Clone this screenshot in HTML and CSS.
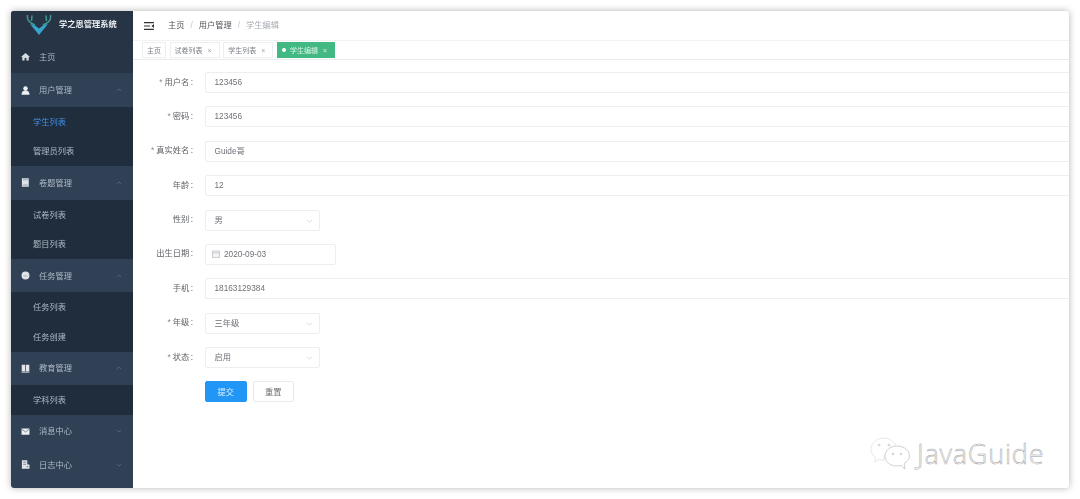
FILE: index.html

```html
<!DOCTYPE html>
<html>
<head>
    <title>学之思管理系统</title>
    <link rel="stylesheet" href="styles.css">
</head>
<body>
    <div class="window">
        <div class="sidebar">
            <div class="logo">
                <svg class="logo-mark" width="26" height="20" viewBox="0 0 26 20">
                    <path d="M1.500 0 C1 4 2.500 7 6 8.500 L9 10 M6 .5 L5.500 6 M24.500 0 C25 4 23.500 7 20 8.500 L17 10 M20 .5 L20.500 6" fill="none" stroke="#3f9a96" stroke-width="1.500"/>
                    <path d="M4 9 L9 10.500 L13 13.500 L17 10.500 L22 9 L17 15 L13 20 L9 15 Z" fill="#36a5cc"/>
                </svg>
                <span class="logo-text">学之思管理系统</span>
            </div>
            <div class="menu-item first">
                <svg class="menu-icon" viewBox="0 0 10 10"><path d="M5 1 L10 5.600 L8.600 5.600 L8.600 9.400 L6 9.400 L6 6.600 L4 6.600 L4 9.400 L1.400 9.400 L1.400 5.600 L0 5.600 Z" fill="#d6dbe1"/></svg>
                <span>主页</span>
            </div>
            <div class="menu-item">
                <svg class="menu-icon" viewBox="0 0 10 10"><circle cx="5" cy="2.800" r="2.500" fill="#eef1f4"/><path d="M.6 9.600 C.6 6.400 2.200 5 5 5 C7.800 5 9.400 6.400 9.400 9.600 Z" fill="#eef1f4"/></svg>
                <span>用户管理</span>
                <svg class="arrow" viewBox="0 0 8 5"><path d="M1 4 L4 1 L7 4" /></svg>
            </div>
            <div class="sub-item active">学生列表</div>
            <div class="sub-item">管理员列表</div>
            <div class="menu-item">
                <svg class="menu-icon" viewBox="0 0 10 10"><path d="M1 .4 H8.600 V9.600 H1 Z" fill="#dfe3e8"/><path d="M2 7.800 H7.600 M2 2 H7.600" stroke="#6a7a8d" stroke-width="0.700"/></svg>
                <span>卷题管理</span>
                <svg class="arrow" viewBox="0 0 8 5"><path d="M1 4 L4 1 L7 4" /></svg>
            </div>
            <div class="sub-item">试卷列表</div>
            <div class="sub-item">题目列表</div>
            <div class="menu-item">
                <svg class="menu-icon" viewBox="0 0 10 10"><circle cx="5" cy="5" r="4.400" fill="#dfe3e8"/><path d="M3 5.400 H7" stroke="#9aa5b2" stroke-width="0.800"/></svg>
                <span>任务管理</span>
                <svg class="arrow" viewBox="0 0 8 5"><path d="M1 4 L4 1 L7 4" /></svg>
            </div>
            <div class="sub-item">任务列表</div>
            <div class="sub-item">任务创建</div>
            <div class="menu-item">
                <svg class="menu-icon" viewBox="0 0 10 10"><path d="M.8 .8 H4.600 V8 H.8 Z M5.400 .8 H9.200 V8 H5.400 Z" fill="#e3e6ea"/><path d="M.6 9 H9.400" stroke="#e3e6ea" stroke-width="1.100"/></svg>
                <span>教育管理</span>
                <svg class="arrow" viewBox="0 0 8 5"><path d="M1 4 L4 1 L7 4" /></svg>
            </div>
            <div class="sub-item">学科列表</div>
            <div class="menu-item">
                <svg class="menu-icon" viewBox="0 0 10 10"><path d="M.6 1.600 H9.400 V8.600 H.6 Z" fill="#eceff2"/><path d="M.6 2.200 L5 5.600 L9.400 2.200" fill="none" stroke="#56677c" stroke-width="0.800"/></svg>
                <span>消息中心</span>
                <svg class="arrow" viewBox="0 0 8 5"><path d="M1 1 L4 4 L7 1" /></svg>
            </div>
            <div class="menu-item">
                <svg class="menu-icon" viewBox="0 0 10 10"><path d="M1 .4 H7 V5 H9.400 V9.600 H1 Z" fill="#dfe3e8"/><path d="M2.400 2.400 H5.600 M2.400 4.800 H5.600 M6 7.400 H8.200" stroke="#5b6b80" stroke-width="0.800"/></svg>
                <span>日志中心</span>
                <svg class="arrow" viewBox="0 0 8 5"><path d="M1 1 L4 4 L7 1" /></svg>
            </div>
        </div>

        <div class="main">
            <div class="navbar">
                <svg class="hamburger" width="10" height="8" viewBox="0 0 10 8"><path d="M0 .6 H10 M0 4 H6 M0 7.400 H10" stroke="#303133" stroke-width="1.200"/><path d="M10 2 L7.400 4 L10 6 Z" fill="#303133"/></svg>
                <span class="crumb">主页</span>
                <span class="crumb-sep">/</span>
                <span class="crumb">用户管理</span>
                <span class="crumb-sep">/</span>
                <span class="crumb current">学生编辑</span>
            </div>
            <div class="tags">
                <span class="tag">主页</span>
                <span class="tag">试卷列表<i>×</i></span>
                <span class="tag">学生列表<i>×</i></span>
                <span class="tag tag-active"><b></b>学生编辑<i>×</i></span>
            </div>
            <div class="form">
                <div class="row">
                    <div class="label"><em>*</em>用户名<span class="colon">:</span></div>
                    <div class="field wide">123456</div>
                </div>
                <div class="row">
                    <div class="label"><em>*</em>密码<span class="colon">:</span></div>
                    <div class="field wide">123456</div>
                </div>
                <div class="row">
                    <div class="label"><em>*</em>真实姓名<span class="colon">:</span></div>
                    <div class="field wide">Guide哥</div>
                </div>
                <div class="row">
                    <div class="label">年龄<span class="colon">:</span></div>
                    <div class="field wide">12</div>
                </div>
                <div class="row">
                    <div class="label">性别<span class="colon">:</span></div>
                    <div class="field select">男<svg class="caret" viewBox="0 0 8 5"><path d="M1 1 L4 4 L7 1"/></svg></div>
                </div>
                <div class="row">
                    <div class="label">出生日期<span class="colon">:</span></div>
                    <div class="field date">
                        <svg class="cal" viewBox="0 0 8 8"><rect x=".5" y="1" width="7" height="6.500" fill="#f4f4f5" stroke="#c0c4cc" stroke-width=".8"/><path d="M.5 2.800 H7.500" stroke="#c0c4cc" stroke-width=".8"/></svg>
                        2020-09-03
                    </div>
                </div>
                <div class="row">
                    <div class="label">手机<span class="colon">:</span></div>
                    <div class="field wide">18163129384</div>
                </div>
                <div class="row">
                    <div class="label"><em>*</em>年级<span class="colon">:</span></div>
                    <div class="field select">三年级<svg class="caret" viewBox="0 0 8 5"><path d="M1 1 L4 4 L7 1"/></svg></div>
                </div>
                <div class="row">
                    <div class="label"><em>*</em>状态<span class="colon">:</span></div>
                    <div class="field select">启用<svg class="caret" viewBox="0 0 8 5"><path d="M1 1 L4 4 L7 1"/></svg></div>
                </div>
                <div class="buttons">
                    <span class="btn btn-primary">提交</span>
                    <span class="btn">重置</span>
                </div>
            </div>
        </div>
    </div>

    <div class="watermark">
        <svg width="41" height="33" viewBox="0 0 41 33" fill="#fff" stroke="#c4c4c4" stroke-width=".8">
            <path stroke="#e2e2e2" d="M14 1 C7 1 1 6 1 12 C1 16 3 19 6 21 L4.500 25 L9.500 22.500 C11 23 12.500 23.200 14 23.200 C13 17 19 11.500 27 12 C25.500 5.500 20 1 14 1 Z"/>
            <path d="M27 9 C20 9 15 13.500 15 19 C15 25 20 29 27 29 C28.500 29 30 28.800 31 28.300 L35 32 L34 26.500 C37 24.800 39.500 22.500 39.500 19 C39.500 13.500 34 9 27 9 Z"/>
            <circle cx="9" cy="8" r="1"/><circle cx="19" cy="8" r="1"/><circle cx="23" cy="17" r=".9"/><circle cx="31" cy="17" r=".9"/>
        </svg>
        <span>JavaGuide</span>
    </div>
</body>
</html>
```

FILE: styles.css

```css
html, body { margin: 0; height: 499px; overflow: hidden; }
body { background: #fff; font-family: "Liberation Sans", "Noto Sans CJK SC", sans-serif; font-size: 8.250px; padding: 11px; box-sizing: border-box; position: relative; }

.window { display: flex; width: 1058px; height: 477px; background: #fff; border-radius: 3px; overflow: hidden; box-shadow: 0 0 7px rgba(0,0,0,0.3); filter: blur(0.4px); }

.sidebar { width: 122px; flex-shrink: 0; background: #304156; color: #aeb9c6; font-family: "Noto Sans CJK SC", sans-serif; }
.logo { height: 29px; display: flex; align-items: center; background: #263445; padding: 0 0 0 15px; box-sizing: border-box; }
.logo-mark { flex-shrink: 0; margin-bottom: 1px; }
.logo-text { color: #e8ebee; font-weight: bold; margin-left: 7px; padding-bottom: 5px; }

.menu-item { height: 33.400px; display: flex; align-items: center; padding-left: 10px; background: #304156; }
.menu-item.first { background: #263445; }
.menu-item span { padding-bottom: 2px; }
.menu-icon { width: 9px; height: 9px; margin-right: 9px; flex-shrink: 0; }
.arrow { width: 6px; height: 4px; margin-left: auto; margin-right: 11px; fill: none; stroke: #5d6f84; stroke-width: 1; }
.sub-item { height: 29.700px; line-height: 29px; padding-left: 22px; background: #1f2d3d; }
.sub-item.active { color: #4090e8; }

.main { flex: 1; min-width: 0; }
.navbar { height: 30px; display: flex; align-items: center; padding-left: 11px; color: #303133; border-bottom: 1px solid #f2f2f2; box-sizing: border-box; font-family: "Noto Sans CJK SC", sans-serif; }
.hamburger { margin-right: 14px; }
.crumb { color: #50545c; padding-bottom: 4px; }
.crumb.current { color: #a8acb3; }
.crumb-sep { color: #c0c4cc; margin: 0 6px; font-family: "Liberation Sans", sans-serif; }

.tags { height: 19px; display: flex; align-items: flex-start; gap: 3.600px; padding: 1px 0 0 9px; border-bottom: 1px solid #e8eaed; box-sizing: border-box; }
.tag { height: 15.500px; line-height: 14px; border: 1px solid #eceef1; box-sizing: border-box; padding: 0 4px; font-size: 7px; color: #7a7e85; white-space: nowrap; font-family: "Noto Sans CJK SC", sans-serif; }
.tag i { font-style: normal; margin-left: 5px; margin-right: 3px; color: #a0a4ab; font-family: "Liberation Sans", sans-serif; }
.tag-active { background: #42b983; border-color: #42b983; color: #d8f2e5; }
.tag-active i { color: #d9f2e6; }
.tag-active b { display: inline-block; width: 4px; height: 4px; border-radius: 50%; background: #fff; margin-right: 4px; vertical-align: 1px; }

.form { padding-top: 12px; }
.row { display: flex; align-items: center; height: 21px; margin-bottom: 13.400px; }
.label { width: 60px; text-align: right; flex-shrink: 0; color: #606266; margin-right: 12px; padding-bottom: 4px; font-family: "Noto Sans CJK SC", sans-serif; white-space: nowrap; }
.label em { font-style: normal; color: #9a8a8a; margin-right: 2px; font-family: "Liberation Sans", sans-serif; }
.colon { margin-left: 1.500px; font-family: "Liberation Sans", sans-serif; }
.field { height: 21px; line-height: 19px; border: 1px solid #eceef1; border-radius: 2px; box-sizing: border-box; padding: 0 8.500px; color: #6e7177; position: relative; flex-shrink: 0; }
.wide { flex: 1; margin-right: -6px; }
.select { width: 115px; }
.date { width: 131px; display: flex; align-items: center; padding-left: 6px; }
.cal { width: 8px; height: 8px; margin-right: 4px; }
.caret { position: absolute; right: 6px; top: 8px; width: 7px; height: 4px; fill: none; stroke: #c0c4cc; stroke-width: 0.800; }

.buttons { display: flex; gap: 6px; padding-left: 72px; margin-top: -1px; font-family: "Noto Sans CJK SC", sans-serif; }
.btn { width: 41.500px; height: 21px; line-height: 18px; border: 1px solid #e8eaed; border-radius: 2px; box-sizing: border-box; text-align: center; color: #6e7177; }
.btn-primary { background: #2196f7; border-color: #2196f7; color: #dceeff; }

.watermark { position: absolute; left: 870px; top: 435px; display: flex; align-items: center; gap: 6px; }
.watermark span { font-family: "Open Sans", "Liberation Sans", sans-serif; font-size: 27px; color: #fff; -webkit-text-stroke: 0.500px #a0a0a0; letter-spacing: 0.800px; font-weight: 300; }
```
